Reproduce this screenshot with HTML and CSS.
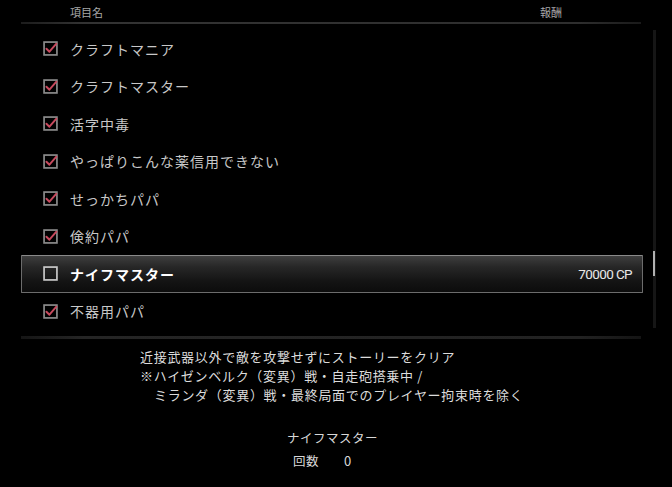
FILE: index.html
```html
<!DOCTYPE html>
<html lang="ja">
<head>
<meta charset="utf-8">
<link rel="stylesheet" href="styles.css">
</head>
<body>
<div class="screen">
  <div class="head">
    <span class="head-name">項目名</span>
    <span class="head-reward">報酬</span>
  </div>
  <div class="rule"></div>
  <div class="list-wrap">
    <ul class="list">
      <li class="row"><span class="box checked"><svg viewBox="0 0 14 14"><rect x="1" y="1" width="12" height="12" class="frame"/><path d="M3.2 7.2 L6 10 L12.5 2.5" class="tick"/></svg></span><span class="label">クラフトマニア</span></li>
      <li class="row"><span class="box checked"><svg viewBox="0 0 14 14"><rect x="1" y="1" width="12" height="12" class="frame"/><path d="M3.2 7.2 L6 10 L12.5 2.5" class="tick"/></svg></span><span class="label">クラフトマスター</span></li>
      <li class="row"><span class="box checked"><svg viewBox="0 0 14 14"><rect x="1" y="1" width="12" height="12" class="frame"/><path d="M3.2 7.2 L6 10 L12.5 2.5" class="tick"/></svg></span><span class="label">活字中毒</span></li>
      <li class="row"><span class="box checked"><svg viewBox="0 0 14 14"><rect x="1" y="1" width="12" height="12" class="frame"/><path d="M3.2 7.2 L6 10 L12.5 2.5" class="tick"/></svg></span><span class="label">やっぱりこんな薬信用できない</span></li>
      <li class="row"><span class="box checked"><svg viewBox="0 0 14 14"><rect x="1" y="1" width="12" height="12" class="frame"/><path d="M3.2 7.2 L6 10 L12.5 2.5" class="tick"/></svg></span><span class="label">せっかちパパ</span></li>
      <li class="row"><span class="box checked"><svg viewBox="0 0 14 14"><rect x="1" y="1" width="12" height="12" class="frame"/><path d="M3.2 7.2 L6 10 L12.5 2.5" class="tick"/></svg></span><span class="label">倹約パパ</span></li>
      <li class="row selected"><span class="box"><svg viewBox="0 0 14 14"><rect x="1" y="1" width="12" height="12" class="frame light"/></svg></span><span class="label">ナイフマスター</span><span class="reward">70000 CP</span></li>
      <li class="row"><span class="box checked"><svg viewBox="0 0 14 14"><rect x="1" y="1" width="12" height="12" class="frame"/><path d="M3.2 7.2 L6 10 L12.5 2.5" class="tick"/></svg></span><span class="label">不器用パパ</span></li>
    </ul>
    <div class="scroll-track"><div class="scroll-thumb"></div></div>
  </div>
  <div class="rule bottom"></div>
  <div class="desc">
    <p>近接武器以外で敵を攻撃せずにストーリーをクリア</p>
    <p>※ハイゼンベルク（変異）戦・自走砲搭乗中 /</p>
    <p class="indent">ミランダ（変異）戦・最終局面でのプレイヤー拘束時を除く</p>
  </div>
  <div class="stats">
    <p class="stats-title">ナイフマスター</p>
    <p class="stats-count"><span>回数</span><span class="num">0</span></p>
  </div>
</div>
</body>
</html>
```
FILE: styles.css
```css
* { box-sizing: border-box; }
html, body { margin: 0; padding: 0; background: #000; }
body {
  width: 672px;
  height: 487px;
  overflow: hidden;
  font-family: "Noto Sans CJK JP", "Noto Sans", sans-serif;
  color: #d0d0d0;
}
p { margin: 0; }
.screen { width: 672px; height: 487px; background: #000; }

.head {
  height: 22px;
  padding: 4px 110px 0 70px;
  display: flex;
  justify-content: space-between;
  font-size: 11px;
  line-height: 17px;
  color: #a8a8a8;
}
.rule {
  margin-left: 21px;
  width: 620px;
  height: 2px;
  background: linear-gradient(to right, #1c1c1c, #333 10%, #2e2e2e 90%, #1a1a1a);
}
.rule.bottom {
  height: 3px;
  margin-top: 6px;
  background: linear-gradient(to right, #151515, #252525 10%, #222 90%, #141414);
}

.list-wrap {
  display: flex;
  padding: 6px 0 0 21px;
}
.list {
  list-style: none;
  margin: 0;
  padding: 0;
  width: 622px;
}
.row {
  height: 37.5px;
  display: flex;
  align-items: center;
  padding-left: 22px;
  font-size: 14px;
  letter-spacing: 1px;
  color: #c8c8c8;
}
.box { width: 15px; height: 15px; display: block; margin-right: 12px; }
.box svg { width: 15px; height: 15px; display: block; overflow: visible; }
.frame { fill: none; stroke: #8a8a8a; stroke-width: 1.6; }
.frame.light { stroke: #c8c8c8; }
.tick { fill: none; stroke: #c84a5e; stroke-width: 1.8; stroke-linecap: round; stroke-linejoin: round; }

.row.selected {
  border: 1px solid #6c6c6c;
  border-top-color: #8a8a8a;
  border-radius: 1px;
  background: linear-gradient(to bottom, #3e3e3e 0%, #272727 30%, #141414 70%, #0c0c0c 100%);
  color: #fff;
  font-weight: 700;
  padding-left: 21px;
}
.reward {
  margin-left: auto;
  padding-right: 10px;
  font-family: Roboto, "Liberation Sans", sans-serif;
  font-size: 13.5px;
  font-weight: 400;
  letter-spacing: -0.6px;
  color: #e8e8e8;
}

.scroll-track {
  width: 3px;
  height: 298px;
  margin-left: 10px;
  background: #161616;
  padding-top: 221px;
}
.scroll-thumb {
  width: 2px;
  height: 25px;
  background: #b0b0b0;
}

.desc {
  margin-top: 8px;
  padding-left: 140px;
  font-size: 13px;
  line-height: 19px;
  letter-spacing: 0.7px;
  color: #dcdcdc;
}
.desc .indent { padding-left: 14px; }

.stats {
  margin-top: 24px;
  font-size: 12.5px;
  letter-spacing: 0.5px;
  color: #d8d8d8;
}
.stats-title { line-height: 19px; padding-left: 287px; }
.stats-count {
  margin-top: 4px;
  line-height: 19px;
  padding-left: 293px;
  display: flex;
}
.stats-count .num { margin-left: 25px; font-size: 13px; }
```
